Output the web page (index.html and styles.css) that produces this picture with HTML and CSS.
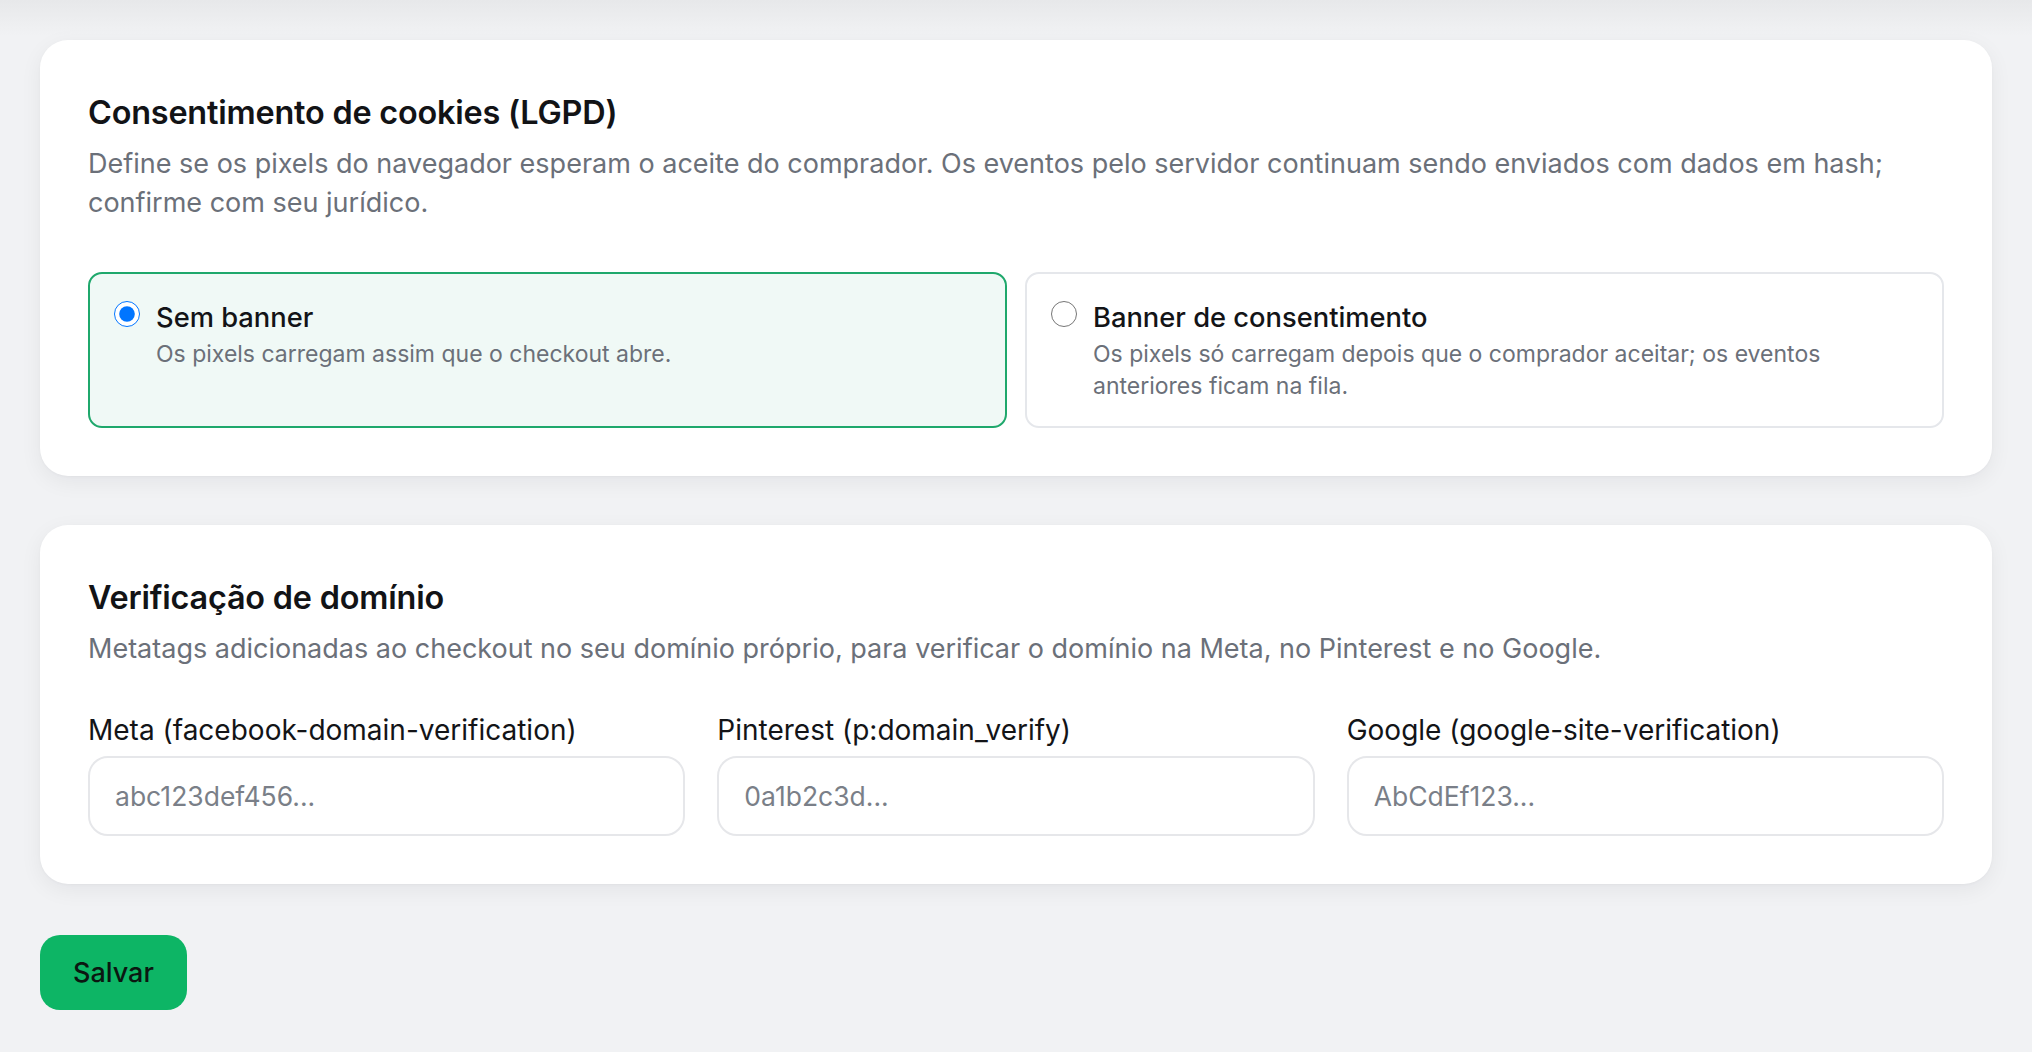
FILE: index.html
```html
<!DOCTYPE html>
<html lang="pt-BR">
<head>
<meta charset="utf-8">
<title>Configurações</title>
<link rel="stylesheet" href="styles.css">
</head>
<body>
<main class="page">
  <section class="card">
    <h2 class="card-title">Consentimento de cookies (LGPD)</h2>
    <p class="card-desc">Define se os pixels do navegador esperam o aceite do comprador. Os eventos pelo servidor continuam sendo enviados com dados em hash; confirme com seu jurídico.</p>
    <div class="options">
      <label class="option option--active">
        <input type="radio" name="consent" class="radio" checked>
        <span class="option-body">
          <span class="option-title">Sem banner</span>
          <span class="option-sub">Os pixels carregam assim que o checkout abre.</span>
        </span>
      </label>
      <label class="option">
        <input type="radio" name="consent" class="radio">
        <span class="option-body">
          <span class="option-title">Banner de consentimento</span>
          <span class="option-sub">Os pixels só carregam depois que o comprador aceitar; os eventos anteriores ficam na fila.</span>
        </span>
      </label>
    </div>
  </section>

  <section class="card">
    <h2 class="card-title">Verificação de domínio</h2>
    <p class="card-desc">Metatags adicionadas ao checkout no seu domínio próprio, para verificar o domínio na Meta, no Pinterest e no Google.</p>
    <div class="fields">
      <label class="field">
        <span class="field-label">Meta (facebook-domain-verification)</span>
        <input class="input" type="text" placeholder="abc123def456...">
      </label>
      <label class="field">
        <span class="field-label">Pinterest (p:domain_verify)</span>
        <input class="input" type="text" placeholder="0a1b2c3d...">
      </label>
      <label class="field">
        <span class="field-label">Google (google-site-verification)</span>
        <input class="input" type="text" placeholder="AbCdEf123...">
      </label>
    </div>
  </section>

  <div class="actions">
    <button class="btn-save" type="button">Salvar</button>
  </div>
</main>
</body>
</html>
```

FILE: styles.css
```css
* { box-sizing: border-box; }

html, body {
  margin: 0;
  padding: 0;
}

body {
  font-family: Inter, "Noto Sans", "Liberation Sans", sans-serif;
  color: #111315;
  background: linear-gradient(#e7e8ea 0px, #f1f2f4 36px, #f1f2f4 100%);
  min-height: 1052px;
}

.page {
  padding: 40px 40px 0;
  display: flex;
  flex-direction: column;
  gap: 49px;
}

.card {
  background: #ffffff;
  border-radius: 28px;
  padding: 52px 48px 48px;
  box-shadow: 0 6px 22px rgba(17, 24, 39, 0.06), 0 1px 3px rgba(17, 24, 39, 0.03);
}

.card-title {
  margin: 0;
  font-size: 32.4px;
  line-height: 41px;
  font-weight: 600;
  color: #121316;
  letter-spacing: -0.2px;
}

.card-desc {
  margin: 11px 0 0;
  font-size: 27px;
  line-height: 39px;
  color: #6b7079;
  font-weight: 400;
}

.options {
  margin-top: 50px;
  display: grid;
  grid-template-columns: 1fr 1fr;
  gap: 18px;
}

.option {
  display: flex;
  align-items: flex-start;
  gap: 16px;
  min-height: 156px;
  padding: 26px 24px 24px;
  border: 2px solid #e5e7eb;
  border-radius: 14px;
  background: #ffffff;
  cursor: pointer;
}

.option--active {
  border-color: #1fa86c;
  background: #f0f9f6;
}

.radio {
  flex: none;
  width: 26px;
  height: 26px;
  margin: 1px 0 0;
  accent-color: #0075ff;
}

.option-body {
  display: flex;
  flex-direction: column;
  gap: 2px;
}

.option-title {
  font-size: 27.3px;
  line-height: 36px;
  font-weight: 500;
  color: #131417;
}

.option-sub {
  font-size: 23px;
  line-height: 32px;
  color: #6b7079;
}

.fields {
  margin-top: 45px;
  display: grid;
  grid-template-columns: repeat(3, 1fr);
  gap: 32px;
}

.field {
  display: flex;
  flex-direction: column;
  gap: 8px;
}

.field-label {
  font-size: 28px;
  line-height: 35px;
  font-weight: 400;
  color: #131417;
}

.input {
  height: 80px;
  width: 100%;
  padding: 0 25px;
  border: 2px solid #e6e7ea;
  border-radius: 20px;
  font-family: inherit;
  font-size: 26.5px;
  color: #131417;
  background: #ffffff;
  outline: none;
}

.input::placeholder {
  color: #7a7f88;
}

.actions {
  margin-top: 2px;
  padding-bottom: 40px;
}

.btn-save {
  height: 75px;
  padding: 0 33px;
  border: none;
  border-radius: 20px;
  background: #0db565;
  color: #0b1711;
  font-family: inherit;
  font-size: 27px;
  font-weight: 500;
  cursor: pointer;
}
```
